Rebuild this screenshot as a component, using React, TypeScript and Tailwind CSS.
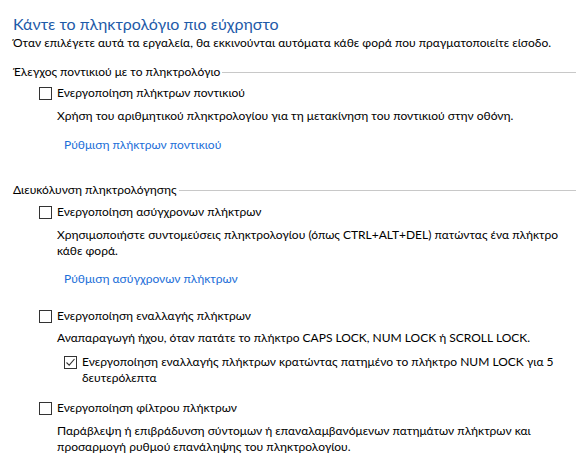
import React from 'react';

function Box({ checked = false }: { checked?: boolean }) {
  return (
    <span className="mt-[2px] flex h-[13px] w-[13px] shrink-0 items-center justify-center border border-[#333333] bg-white">
      {checked && (
        <svg width="11" height="11" viewBox="0 0 11 11">
          <path d="M1.5 5.5 L4.2 8.2 L9.5 2" fill="none" stroke="#333333" strokeWidth="1.1" />
        </svg>
      )}
    </span>
  );
}

function Check({ children, checked }: { children: React.ReactNode; checked?: boolean }) {
  return (
    <label className="flex items-start gap-[5px]">
      <Box checked={checked} />
      <span className="whitespace-nowrap">{children}</span>
    </label>
  );
}

function Group({ title }: { title: string }) {
  return (
    <div className="flex items-center">
      <span className="pr-[2px]">{title}</span>
      <div className="h-px flex-1 bg-[#c8c8c8]" />
    </div>
  );
}

export default function App() {
  return (
    <div
      className="min-h-[457px] w-[578px] bg-white pl-[13px] pr-[2px] pt-[13px] text-[12px] leading-[16px] text-black"
      style={{ fontFamily: 'Lato, "Noto Sans", sans-serif' }}
    >
      <div className="text-[16px] leading-[22px] text-[#1e5aa8]">Κάντε το πληκτρολόγιο πιο εύχρηστο</div>
      <div className="whitespace-nowrap">Όταν επιλέγετε αυτά τα εργαλεία, θα εκκινούνται αυτόματα κάθε φορά που πραγματοποιείτε είσοδο.</div>

      <div className="mt-[13px]">
        <Group title="Έλεγχος ποντικιού με το πληκτρολόγιο" />
      </div>
      <div className="pl-[26px]">
        <div className="mt-[5px]">
          <Check>Ενεργοποίηση πλήκτρων ποντικιού</Check>
        </div>
        <div className="mt-[7px] whitespace-nowrap pl-[18px]">
          Χρήση του αριθμητικού πληκτρολογίου για τη μετακίνηση του ποντικιού στην οθόνη.
        </div>
        <div className="mt-[13px] pl-[25px] text-[#1a6ed8]">Ρύθμιση πλήκτρων ποντικιού</div>
      </div>

      <div className="mt-[29px]">
        <Group title="Διευκόλυνση πληκτρολόγησης" />
      </div>
      <div className="pl-[26px]">
        <div className="mt-[6px]">
          <Check>Ενεργοποίηση ασύγχρονων πλήκτρων</Check>
        </div>
        <div className="mt-[7px] whitespace-nowrap pl-[18px]">
          Χρησιμοποιήστε συντομεύσεις πληκτρολογίου (όπως CTRL+ALT+DEL) πατώντας ένα πλήκτρο
          <br />
          κάθε φορά.
        </div>
        <div className="mt-[12px] pl-[25px] text-[#1a6ed8]">Ρύθμιση ασύγχρονων πλήκτρων</div>

        <div className="mt-[21px]">
          <Check>Ενεργοποίηση εναλλαγής πλήκτρων</Check>
        </div>
        <div className="mt-[6px] whitespace-nowrap pl-[18px]">
          Αναπαραγωγή ήχου, όταν πατάτε το πλήκτρο CAPS LOCK, NUM LOCK ή SCROLL LOCK.
        </div>
        <div className="mt-[8px] pl-[25px]">
          <Check checked>
            Ενεργοποίηση εναλλαγής πλήκτρων κρατώντας πατημένο το πλήκτρο NUM LOCK για 5
            <br />
            δευτερόλεπτα
          </Check>
        </div>

        <div className="mt-[14px]">
          <Check>Ενεργοποίηση φίλτρου πλήκτρων</Check>
        </div>
        <div className="mt-[7px] whitespace-nowrap pl-[18px]">
          Παράβλεψη ή επιβράδυνση σύντομων ή επαναλαμβανόμενων πατημάτων πλήκτρων και
          <br />
          προσαρμογή ρυθμού επανάληψης του πληκτρολογίου.
        </div>
      </div>
    </div>
  );
}
